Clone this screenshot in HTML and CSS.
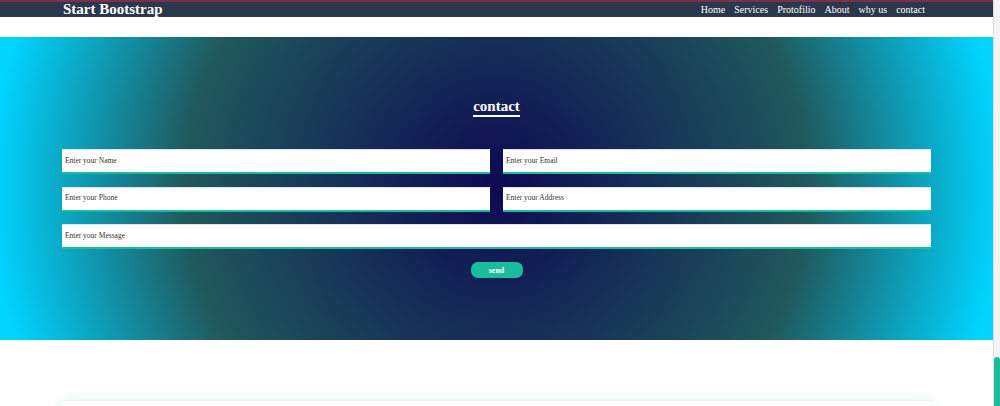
FILE: index.html
```html
<!DOCTYPE html>
<html lang="en">
<head>
<meta charset="utf-8">
<title>Start Bootstrap - contact</title>
<link rel="stylesheet" href="styles.css">
</head>
<body>
<header class="navbar">
  <div class="container nav-inner">
    <a class="brand" href="#">Start Bootstrap</a>
    <nav class="nav-links">
      <a href="#">Home</a>
      <a href="#">Services</a>
      <a href="#">Protofilio</a>
      <a href="#">About</a>
      <a href="#">why us</a>
      <a href="#">contact</a>
    </nav>
  </div>
</header>
<main class="page">
  <section class="contact">
    <div class="container">
      <div class="heading-wrap"><h2 class="heading">contact</h2></div>
      <form class="contact-form">
        <div class="row">
          <input class="field" type="text" placeholder="Enter your Name">
          <input class="field" type="email" placeholder="Enter your Email">
        </div>
        <div class="row">
          <input class="field" type="text" placeholder="Enter your Phone">
          <input class="field" type="text" placeholder="Enter your Address">
        </div>
        <div class="row single">
          <input class="field" type="text" placeholder="Enter your Message">
        </div>
        <div class="actions"><button class="send" type="button">send</button></div>
      </form>
    </div>
  </section>
  <div class="container">
    <div class="card"></div>
  </div>
</main>
<div class="scrollbar"><div class="thumb"></div></div>
</body>
</html>
```
FILE: styles.css
```css
html {
  overflow: hidden;
  height: 100%;
}
body {
  margin: 0;
  width: calc(100% - 7px);
  font-family: "Liberation Serif", "Times New Roman", serif;
  background: #ffffff;
  color: #333;
}
.container {
  width: 869px;
  margin: 0 auto;
}
.navbar {
  background: #2b374b;
  border-top: 2px solid #7b2f4e;
  height: 15px;
}
.nav-inner {
  display: flex;
  justify-content: space-between;
  align-items: center;
  height: 15px;
}
.brand {
  color: #ffffff;
  font-weight: bold;
  font-size: 15px;
  line-height: 15px;
  text-decoration: none;
  margin-left: 1px;
}
.nav-links {
  display: flex;
  margin-right: 1.5px;
}
.nav-links a {
  color: #ffffff;
  font-size: 10px;
  line-height: 15px;
  text-decoration: none;
  padding: 0 4.5px;
}
.page {
  margin-top: 20px;
}
.contact {
  background: radial-gradient(circle, rgb(13, 9, 82) 0%, rgb(31, 89, 92) 60%, rgb(0, 212, 255) 97%);
  padding: 61px 0 62px;
}
.heading-wrap {
  display: flex;
  justify-content: center;
}
.heading {
  margin: 0;
  color: #ffffff;
  font-size: 15px;
  line-height: 17px;
  font-weight: bold;
  border-bottom: 2px solid #ffffff;
}
.contact-form {
  margin-top: 32px;
  display: flex;
  flex-direction: column;
  gap: 12.5px;
}
.row {
  display: flex;
  gap: 13px;
}
.field {
  flex: 1;
  min-width: 0;
  height: 25px;
  box-sizing: border-box;
  border: none;
  border-top: 1px solid #dfe2f4;
  border-bottom: 2px solid #1abc9c;
  background: #ffffff;
  padding: 0 3px 2px;
  margin: 0;
  font-family: "Liberation Serif", "Times New Roman", serif;
  font-size: 7.5px;
  color: #333;
  outline: none;
}
.field::placeholder {
  color: #333;
  opacity: 1;
}
.actions {
  display: flex;
  justify-content: center;
  margin-top: 0.5px;
}
.send {
  width: 52px;
  height: 16px;
  border: none;
  border-radius: 7px;
  background: #1abc9c;
  color: #ffffff;
  font-family: "Liberation Serif", "Times New Roman", serif;
  font-weight: bold;
  font-size: 8px;
  padding: 0;
}
.card {
  margin-top: 60px;
  height: 120px;
  background: #ffffff;
  border-top: 1px solid #e6f2f0;
  box-shadow: 0 0 14px rgba(26, 188, 156, 0.14);
}
.scrollbar {
  position: fixed;
  top: 0;
  right: 0;
  bottom: 0;
  width: 6px;
  background: #f4f4f4;
  border-left: 1px solid #dcdcdc;
}
.thumb {
  position: absolute;
  left: 0;
  right: 0;
  top: 357px;
  bottom: 0;
  background: #1abc9c;
  border-radius: 3px 3px 0 0;
}
```
